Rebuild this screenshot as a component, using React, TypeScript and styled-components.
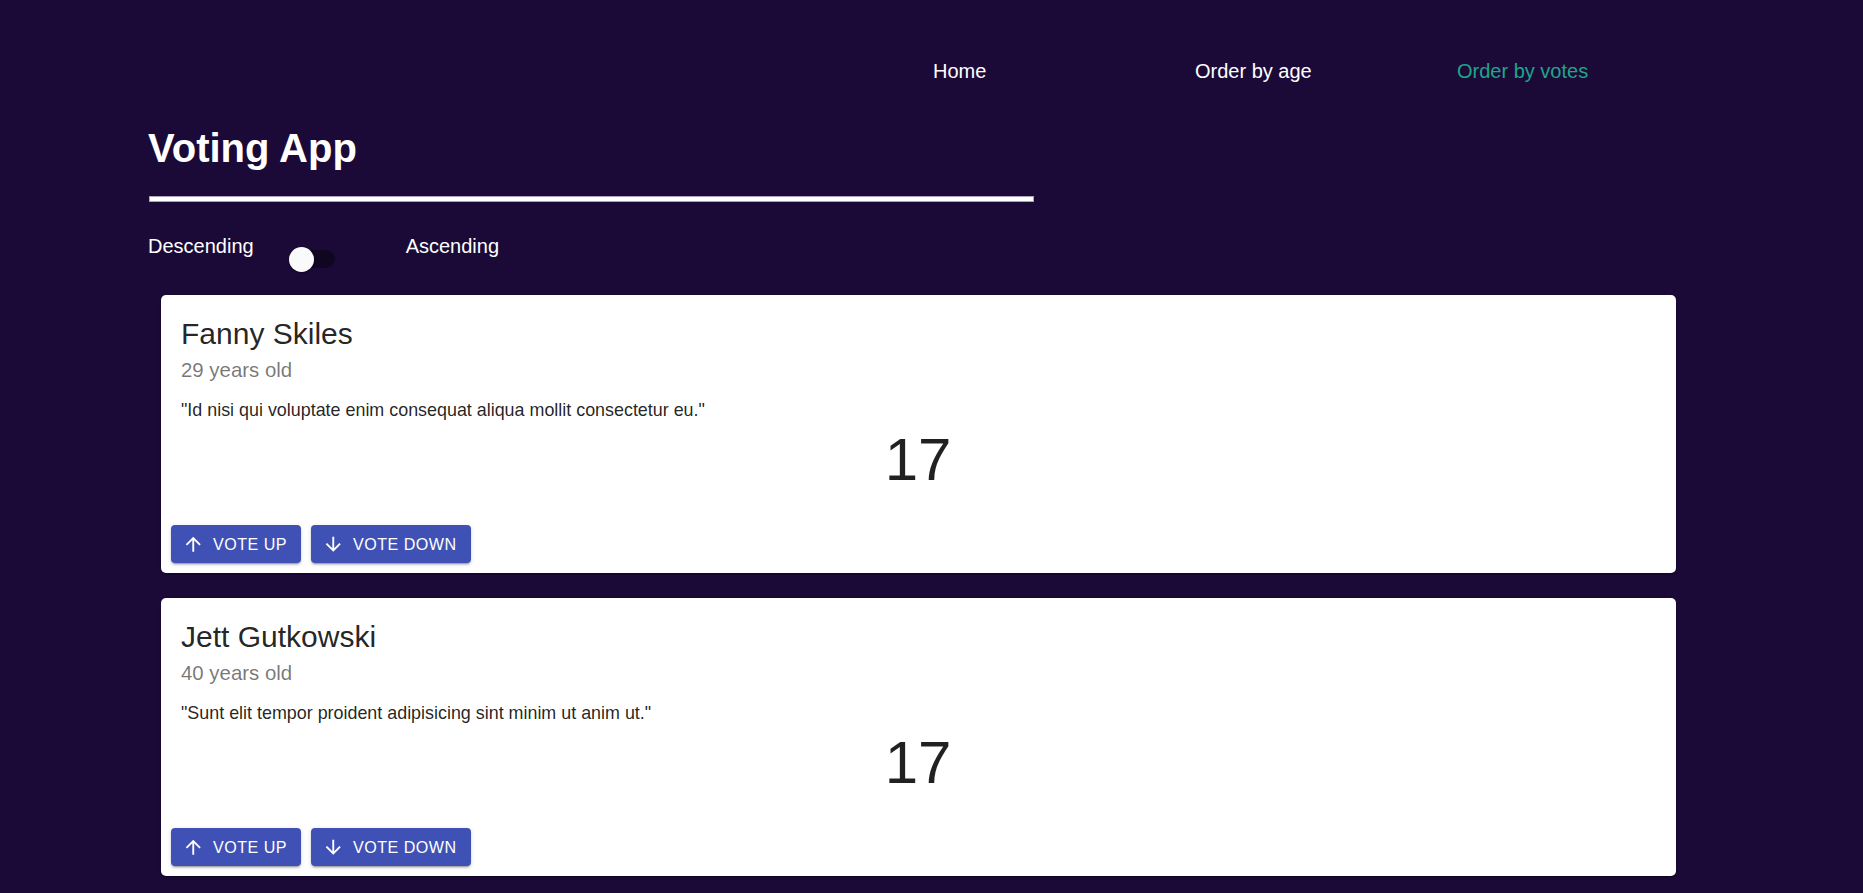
import React from "react";
import styled, { createGlobalStyle } from "styled-components";

const GlobalStyle = createGlobalStyle`
  html, body {
    margin: 0;
    padding: 0;
    background: #1b0a38;
  }
  body {
    font-family: "Liberation Sans", Arial, Helvetica, sans-serif;
    overflow: hidden;
  }
  * { box-sizing: border-box; }
`;

const Page = styled.div`
  min-height: 893px;
  background: #1b0a38;
  padding-top: 60px;
`;

const Nav = styled.nav`
  display: grid;
  grid-template-columns: repeat(3, 262px);
  margin-left: 933px;
`;

const NavLink = styled.a<{ $active?: boolean }>`
  font-size: 20px;
  line-height: 23px;
  color: ${(p) => (p.$active ? "#1fa588" : "#ffffff")};
  text-decoration: none;
  cursor: pointer;
`;

const Main = styled.main`
  width: 1540px;
  margin-left: 148px;
`;

const Title = styled.h1`
  margin: 42px 0 0;
  font-size: 40px;
  line-height: 46px;
  font-weight: 700;
  color: #ffffff;
`;

const Divider = styled.hr`
  margin: 25px 0 0 1px;
  width: 885px;
  height: 6px;
  background: #ffffff;
  border: 1px solid #a9a4b8;
`;

const SortRow = styled.div`
  display: flex;
  align-items: flex-start;
  margin-top: 33px;
  height: 37px;
`;

const SortLabel = styled.span<{ $gap?: number }>`
  font-size: 20px;
  line-height: 23px;
  color: #ffffff;
  margin-left: ${(p) => p.$gap ?? 0}px;
`;

const Switch = styled.div`
  position: relative;
  width: 46px;
  height: 37px;
  margin-left: 35px;
  cursor: pointer;
`;

const Track = styled.div`
  position: absolute;
  left: 5px;
  top: 15px;
  width: 41px;
  height: 18px;
  border-radius: 9px;
  background: rgba(0, 0, 0, 0.38);
`;

const Thumb = styled.div`
  position: absolute;
  left: 0;
  top: 12px;
  width: 25px;
  height: 25px;
  border-radius: 50%;
  background: #fafafa;
  box-shadow: 0 2px 1px -1px rgba(0, 0, 0, 0.2), 0 1px 1px 0 rgba(0, 0, 0, 0.14),
    0 1px 3px 0 rgba(0, 0, 0, 0.12);
`;

const CardList = styled.div`
  display: flex;
  flex-direction: column;
  gap: 25px;
  margin-top: 23px;
  padding: 0 12px 0 13px;
`;

const Card = styled.article`
  background: #ffffff;
  border-radius: 5px;
  height: 278px;
  display: flex;
  flex-direction: column;
  box-shadow: 0 2px 1px -1px rgba(0, 0, 0, 0.2), 0 1px 1px 0 rgba(0, 0, 0, 0.14),
    0 1px 3px 0 rgba(0, 0, 0, 0.12);
`;

const CardContent = styled.div`
  padding: 19px 21px 19px 20px;
  flex: 1;
`;

const Name = styled.h2`
  margin: 0;
  font-size: 30px;
  line-height: 40px;
  font-weight: 400;
  color: rgba(0, 0, 0, 0.87);
`;

const Age = styled.div`
  margin-top: 1px;
  font-size: 20.4px;
  line-height: 30px;
  color: rgba(0, 0, 0, 0.54);
`;

const Quote = styled.p`
  margin: 13px 0 0;
  font-size: 17.9px;
  line-height: 25px;
  color: rgba(0, 0, 0, 0.87);
`;

const Votes = styled.div`
  margin-top: 1px;
  font-size: 60px;
  line-height: 72px;
  text-align: center;
  color: rgba(0, 0, 0, 0.87);
`;

const Actions = styled.div`
  display: flex;
  gap: 10px;
  padding: 0 10px 10px 10px;
`;

const VoteButton = styled.button`
  display: inline-flex;
  align-items: center;
  gap: 8.5px;
  height: 38px;
  padding: 0 14px 0 11px;
  border: none;
  border-radius: 4px;
  background: #3f51b5;
  color: #ffffff;
  font-family: "Liberation Sans", Arial, sans-serif;
  font-size: 16.1px;
  font-weight: 500;
  letter-spacing: 0.48px;
  text-transform: uppercase;
  cursor: pointer;
  box-shadow: 0 3px 1px -2px rgba(0, 0, 0, 0.2), 0 2px 2px 0 rgba(0, 0, 0, 0.14),
    0 1px 5px 0 rgba(0, 0, 0, 0.12);
`;

const Icon = styled.svg`
  width: 22.5px;
  height: 22.5px;
  fill: currentColor;
  flex: none;
`;

const ArrowUp = () => (
  <Icon viewBox="0 0 24 24">
    <path d="M4 12l1.41 1.41L11 7.83V20h2V7.83l5.58 5.59L20 12l-8-8-8 8z" />
  </Icon>
);

const ArrowDown = () => (
  <Icon viewBox="0 0 24 24">
    <path d="M20 12l-1.41-1.41L13 16.17V4h-2v12.17l-5.58-5.59L4 12l8 8 8-8z" />
  </Icon>
);

type Person = { name: string; age: number; quote: string; votes: number };

const people: Person[] = [
  {
    name: "Fanny Skiles",
    age: 29,
    quote: "Id nisi qui voluptate enim consequat aliqua mollit consectetur eu.",
    votes: 17,
  },
  {
    name: "Jett Gutkowski",
    age: 40,
    quote: "Sunt elit tempor proident adipisicing sint minim ut anim ut.",
    votes: 17,
  },
];

export default function App() {
  return (
    <>
      <GlobalStyle />
      <Page>
        <Nav>
          <NavLink>Home</NavLink>
          <NavLink>Order by age</NavLink>
          <NavLink $active>Order by votes</NavLink>
        </Nav>
        <Main>
          <Title>Voting App</Title>
          <Divider />
          <SortRow>
            <SortLabel>Descending</SortLabel>
            <Switch>
              <Track />
              <Thumb />
            </Switch>
            <SortLabel $gap={71}>Ascending</SortLabel>
          </SortRow>
          <CardList>
            {people.map((p) => (
              <Card key={p.name}>
                <CardContent>
                  <Name>{p.name}</Name>
                  <Age>{p.age} years old</Age>
                  <Quote>"{p.quote}"</Quote>
                  <Votes>{p.votes}</Votes>
                </CardContent>
                <Actions>
                  <VoteButton>
                    <ArrowUp />
                    Vote up
                  </VoteButton>
                  <VoteButton>
                    <ArrowDown />
                    Vote down
                  </VoteButton>
                </Actions>
              </Card>
            ))}
          </CardList>
        </Main>
      </Page>
    </>
  );
}
